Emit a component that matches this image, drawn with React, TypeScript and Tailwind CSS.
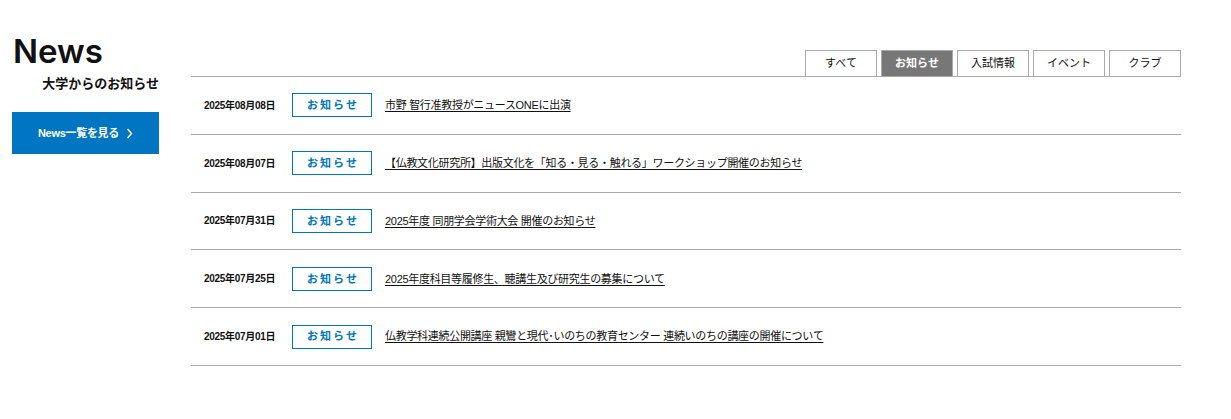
import React from "react";

const tabs = ["すべて", "お知らせ", "入試情報", "イベント", "クラブ"];

const news = [
  { date: "2025年08月08日", title: "市野 智行准教授がニュースONEに出演" },
  { date: "2025年08月07日", title: "【仏教文化研究所】出版文化を「知る・見る・触れる」ワークショップ開催のお知らせ" },
  { date: "2025年07月31日", title: "2025年度 同朋学会学術大会 開催のお知らせ" },
  { date: "2025年07月25日", title: "2025年度科目等履修生、聴講生及び研究生の募集について" },
  { date: "2025年07月01日", title: "仏教学科連続公開講座 親鸞と現代･いのちの教育センター 連続いのちの講座の開催について" },
];

const jp = "font-['Liberation_Sans','Noto_Sans_CJK_JP',sans-serif]";

export default function App() {
  return (
    <div className={`w-[1231px] h-[419px] bg-white flex px-3 pt-[50px] text-[#111] ${jp}`}>
      <div className="w-[147px] shrink-0 flex flex-col -mt-[16px]">
        <h2 className="font-['Inter',sans-serif] font-semibold text-[33px] leading-[34px] text-[#111] pl-px">
          News
        </h2>
        <p className="text-right text-[13px] font-bold leading-[16px] mt-[7px] font-['Noto_Sans_CJK_JP',sans-serif]">
          大学からのお知らせ
        </p>
        <a className="mt-[21px] h-[42px] bg-[#0075c2] text-white flex items-center justify-center gap-[7px] text-[11px] font-bold tracking-[-0.3px]">
          <span>News一覧を見る</span>
          <svg width="7" height="11" viewBox="0 0 7 11" fill="none">
            <path d="M1.5 1 L5.5 5.5 L1.5 10" stroke="white" strokeWidth="1.4" />
          </svg>
        </a>
      </div>
      <div className="ml-[32px] w-[990px] flex flex-col">
        <div className="flex justify-end gap-[4px] h-[26px]">
          {tabs.map((t) => (
            <div
              key={t}
              className={`w-[72px] h-[26px] flex items-center justify-center text-[11px] border border-b-0 border-[#aaa] ${
                t === "お知らせ" ? "bg-[#777] border-[#777] text-white font-bold" : "bg-white text-[#111]"
              }`}
            >
              {t}
            </div>
          ))}
        </div>
        <ul className="border-t border-[#aaa]">
          {news.map((n) => (
            <li key={n.date} className="h-[57.8px] border-b border-[#aaa] flex items-center pl-[13px]">
              <span className="w-[88px] shrink-0 text-[10px] font-bold tracking-[-0.3px]">{n.date}</span>
              <span className="w-[80px] h-[24px] shrink-0 border border-[#0075c2] text-[#0075c2] flex items-center justify-center text-[11px] font-bold tracking-[2px] pl-[2px]">
                お知らせ
              </span>
              <a className="ml-[13px] text-[11px] underline underline-offset-[2px] text-[#111] tracking-[-0.3px]">
                {n.title}
              </a>
            </li>
          ))}
        </ul>
      </div>
    </div>
  );
}
